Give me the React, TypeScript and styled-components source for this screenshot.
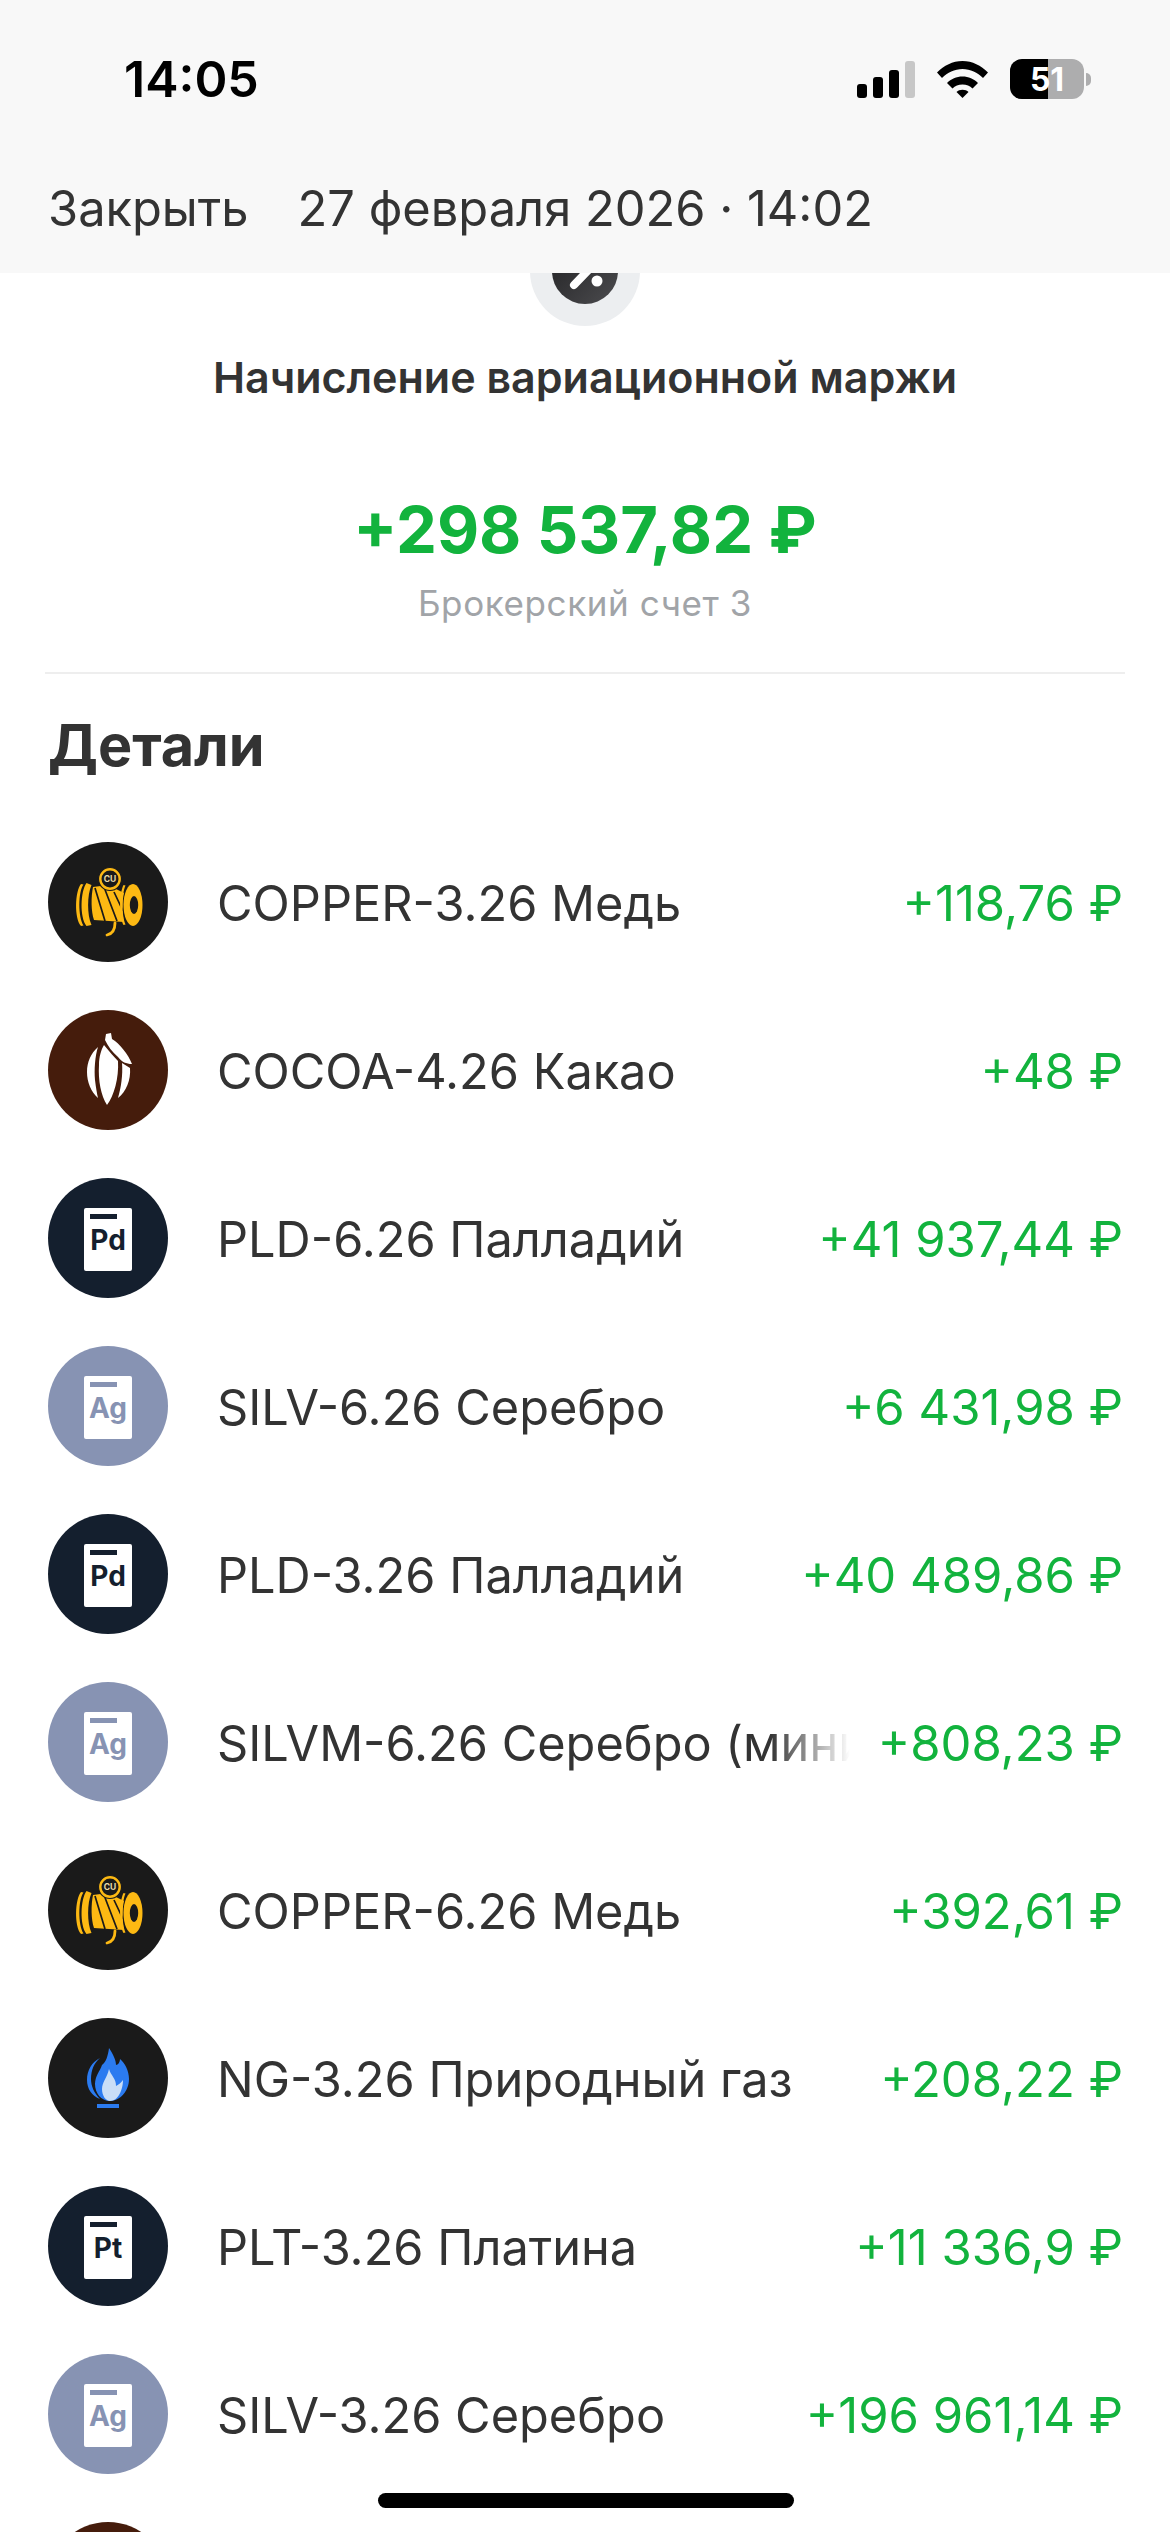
import { createGlobalStyle, styled } from "styled-components";

// last row is only peeking out from under the screen edge, its text is not visible
const rows = [
  { id: 1, icon: "copper", name: "COPPER-3.26 Медь", value: "+118,76 ₽" },
  { id: 2, icon: "cocoa", name: "COCOA-4.26 Какао", value: "+48 ₽" },
  { id: 3, icon: "Pd", name: "PLD-6.26 Палладий", value: "+41 937,44 ₽" },
  { id: 4, icon: "Ag", name: "SILV-6.26 Серебро", value: "+6 431,98 ₽" },
  { id: 5, icon: "Pd", name: "PLD-3.26 Палладий", value: "+40 489,86 ₽" },
  { id: 6, icon: "Ag", name: "SILVM-6.26 Серебро (мини)", value: "+808,23 ₽", fade: true },
  { id: 7, icon: "copper", name: "COPPER-6.26 Медь", value: "+392,61 ₽" },
  { id: 8, icon: "gas", name: "NG-3.26 Природный газ", value: "+208,22 ₽" },
  { id: 9, icon: "Pt", name: "PLT-3.26 Платина", value: "+11 336,9 ₽" },
  { id: 10, icon: "Ag", name: "SILV-3.26 Серебро", value: "+196 961,14 ₽" },
  { id: 11, icon: "cocoa", name: "", value: "" },
];

const CopperIcon = () => (
  <svg viewBox="0 0 120 120" width="120" height="120">
    <circle cx="60" cy="60" r="60" fill="#1a1a1a" />
    <path d="M33 42C27 49 26 76 33 84l2.500-.5C30 75 30 50 35.500 42.500z" fill="#fdb913" />
    <path d="M38.500 41C32.500 49 31.500 75 38.500 84l5-1C39 73 39 53 43.500 43z" fill="#fdb913" />
    <path d="M45 45l15-2 16 8c-2 8-2 21 0 29l-30-2c-3-9-3-23-1-33z" fill="#fdb913" />
    <path d="M47 46l10 33M56 45l13 34M66 50l9 19" stroke="#1a1a1a" strokeWidth="1.700" fill="none" />
    <path d="M75.500 43C71 52 71 74 75.500 83l2-.5C73.500 74 73.500 52 77.500 43.500z" fill="#fdb913" />
    <ellipse cx="85" cy="63" rx="9.500" ry="21" fill="#fdb913" />
    <ellipse cx="86" cy="63" rx="4.200" ry="9" fill="#1a1a1a" />
    <circle cx="62" cy="37" r="11.500" fill="#fdb913" stroke="#1a1a1a" strokeWidth="1.200" />
    <circle cx="62" cy="37" r="8.500" fill="#1a1a1a" />
    <text x="62" y="40" textAnchor="middle" fontSize="8.500" fontWeight="700" fontFamily="Inter, sans-serif" fill="#e9d9a8">
      CU
    </text>
    <path d="M67 81c0 7-3 11-8 12" stroke="#fdb913" strokeWidth="2.800" fill="none" strokeLinecap="round" />
  </svg>
);

const CocoaIcon = () => (
  <svg viewBox="0 0 120 120" width="120" height="120">
    <circle cx="60" cy="60" r="60" fill="#451c0c" />
    <path d="M58 24l5-1 1 6c8 5 16 15 20 25-6 0-10-2-14-7-6-5-10-11-13-17z" fill="#fff" />
    <path d="M56 35c6 7 10 12 14 16 1 17-4 35-11 44-6-9-9-25-8-40 0-8 2-15 5-20z" fill="#fff" />
    <path d="M50 37c-3 9-4 23-3 33 1 8 2 14 3 18-7-6-11-16-11-26s4-19 11-25z" fill="#fff" />
    <path d="M74 53l8 5c1 12-4 24-12 30 3-10 5-23 4-35z" fill="#fff" />
  </svg>
);

const GasIcon = () => (
  <svg viewBox="0 0 120 120" width="120" height="120">
    <circle cx="60" cy="60" r="60" fill="#1a1a1a" />
    <path d="M52 40c-8 4-13 12-13 22 0 9 5 16 13 19-6-6-9-13-9-20 0-9 3-16 9-21z" fill="#2b7bf0" />
    <path d="M61 30c4 6 7 12 7 17 2 0 4-3 4-6 5 4 9 12 9 20 0 12-9 22-19 22-9 0-15-8-15-17 0-8 5-13 7-19 4-3 6-9 7-17z" fill="#2b7bf0" />
    <path d="M61 51c2 7 7 9 7 17 2-1 5-3 7-6 0 10-5 21-13 21-4 0-8-5-8-12 0-7 5-11 7-20z" fill="#c9def7" />
    <rect x="49" y="86" width="22" height="4" fill="#2b7bf0" />
  </svg>
);

const MetalIcon = ({ symbol }: { symbol: string }) => (
  <MetalCircle $light={symbol === "Ag"}>
    <MetalCard>
      <MetalBar $light={symbol === "Ag"} />
      <MetalSymbol $light={symbol === "Ag"}>{symbol}</MetalSymbol>
    </MetalCard>
  </MetalCircle>
);

const RowIcon = ({ icon }: { icon: string }) => {
  if (icon === "copper") return <CopperIcon />;
  if (icon === "cocoa") return <CocoaIcon />;
  if (icon === "gas") return <GasIcon />;
  return <MetalIcon symbol={icon} />;
};

const App = () => {
  return (
    <Screen>
      <GlobalStyle />
      <Header>
        <StatusBar>
          <Time>14:05</Time>
          <StatusIcons>
            <SignalBars>
              <SignalBar $h={14} />
              <SignalBar $h={21} />
              <SignalBar $h={28} />
              <SignalBar $h={37} $off />
            </SignalBars>
            <svg viewBox="0 0 51 37" width="51" height="37">
              <path d="M0 11.500C7 4.500 15.500 0 25.500 0S44 4.500 51 11.500l-5 5.500C40.500 11.500 33.500 8 25.500 8S10.500 11.500 5 17z" fill="#000" />
              <path d="M10 22c4-4 9.500-6.500 15.500-6.500S37 18 41 22l-5.500 5.500c-2.500-2.500-6-4-10-4s-7.500 1.500-10 4z" fill="#000" />
              <path d="M19.500 31c1.500-1.500 3.500-2.200 6-2.200s4.500.7 6 2.200l-6 6z" fill="#000" />
            </svg>
            <Battery>
              <BatteryBody>
                <BatteryLevel />
                <BatteryText>51</BatteryText>
              </BatteryBody>
              <BatteryCap />
            </Battery>
          </StatusIcons>
        </StatusBar>
        <TopBar>
          <CloseLabel>Закрыть</CloseLabel>
          <DateLabel>27 февраля 2026 · 14:02</DateLabel>
        </TopBar>
      </Header>
      <Scroll>
        <HeroIcon>
          <svg viewBox="0 0 66 66" width="66" height="66">
            <defs>
              <linearGradient id="heroFill" x1="0" y1="0" x2="1" y2="1">
                <stop offset="0" stopColor="#1f1f21" />
                <stop offset="1" stopColor="#4c4c4f" />
              </linearGradient>
            </defs>
            <circle cx="33" cy="33" r="33" fill="url(#heroFill)" />
            <path d="M22 47l26-27" stroke="#fff" strokeWidth="8" strokeLinecap="round" />
            <circle cx="21" cy="21" r="5.500" fill="#fff" />
            <circle cx="45" cy="43" r="5.500" fill="#fff" />
          </svg>
        </HeroIcon>
        <OperationTitle>Начисление вариационной маржи</OperationTitle>
        <TotalAmount>+298 537,82 ₽</TotalAmount>
        <AccountName>Брокерский счет 3</AccountName>
        <Divider />
        <SectionTitle>Детали</SectionTitle>
        <List>
          {rows.map((row) => (
            <Row key={row.id}>
              <IconSlot>
                <RowIcon icon={row.icon} />
              </IconSlot>
              <RowName $fade={row.fade}>{row.name}</RowName>
              <RowValue>{row.value}</RowValue>
            </Row>
          ))}
        </List>
      </Scroll>
      <HomeIndicator />
    </Screen>
  );
};

export default App;

const GlobalStyle = createGlobalStyle`
  html, body {
    margin: 0;
    padding: 0;
    background: #fff;
  }
  * {
    box-sizing: border-box;
  }
`;

const Screen = styled.div`
  position: relative;
  width: 1170px;
  height: 2532px;
  display: flex;
  flex-direction: column;
  overflow: hidden;
  background: #fff;
  font-family: Inter, "Noto Sans", sans-serif;
  color: #333;
`;

const Header = styled.header`
  position: relative;
  z-index: 2;
  height: 273px;
  flex-shrink: 0;
  background: #f8f8f8;
`;

const StatusBar = styled.div`
  height: 156px;
  padding: 48px 79px 0 124px;
  display: flex;
  justify-content: space-between;
  align-items: flex-start;
`;

const Time = styled.span`
  margin-top: 1px;
  color: #000;
  font-size: 50px;
  font-weight: 600;
  line-height: 60px;
`;

const StatusIcons = styled.div`
  display: flex;
  align-items: center;
  gap: 22px;
  padding-top: 11px;
`;

const SignalBars = styled.div`
  display: flex;
  align-items: flex-end;
  gap: 6px;
  height: 37px;
`;

const SignalBar = styled.div<{ $h: number; $off?: boolean }>`
  width: 10px;
  height: ${(p) => p.$h}px;
  border-radius: 3px;
  background: ${(p) => (p.$off ? "#c7c7c7" : "#000")};
`;

const Battery = styled.div`
  display: flex;
  align-items: center;
  gap: 2px;
`;

const BatteryBody = styled.div`
  position: relative;
  width: 74px;
  height: 40px;
  border-radius: 12px;
  overflow: hidden;
  background: #adadae;
`;

const BatteryLevel = styled.div`
  width: 38px;
  height: 100%;
  background: #000;
`;

const BatteryText = styled.span`
  position: absolute;
  inset: 0;
  display: flex;
  align-items: center;
  justify-content: center;
  color: #fff;
  font-size: 32px;
  font-weight: 700;
`;

const BatteryCap = styled.div`
  width: 5px;
  height: 13px;
  border-radius: 0 6px 6px 0;
  background: #adadae;
`;

const TopBar = styled.div`
  display: flex;
  align-items: center;
  padding: 0 48px;
  gap: 49px;
  height: 104px;
`;

const CloseLabel = styled.span`
  font-size: 48.8px;
  font-weight: 400;
`;

const DateLabel = styled.span`
  font-size: 48.8px;
  font-weight: 400;
`;

const Scroll = styled.main`
  flex: 1;
  min-height: 0;
  overflow: hidden;
  display: flex;
  flex-direction: column;
`;

const HeroIcon = styled.div`
  align-self: center;
  flex-shrink: 0;
  width: 110px;
  height: 110px;
  margin-top: -57px;
  border-radius: 50%;
  background: #eceef0;
  display: flex;
  align-items: center;
  justify-content: center;
`;

const OperationTitle = styled.h1`
  margin: 26px 0 0;
  text-align: center;
  font-size: 43px;
  font-weight: 600;
  line-height: 50px;
`;

const TotalAmount = styled.div`
  margin-top: 88px;
  text-align: center;
  color: #12b33d;
  font-size: 65px;
  font-weight: 700;
  line-height: 80px;
`;

const AccountName = styled.div`
  margin-top: 11px;
  text-align: center;
  color: #a1a4a8;
  font-size: 35px;
  line-height: 44px;
  letter-spacing: 0.6px;
`;

const Divider = styled.div`
  margin: 47px 45px 0;
  height: 2px;
  flex-shrink: 0;
  background: #eeeeee;
`;

const SectionTitle = styled.h2`
  margin: 36px 48px 0;
  font-size: 57.5px;
  font-weight: 700;
  line-height: 70px;
`;

const List = styled.div`
  margin-top: 38px;
  display: flex;
  flex-direction: column;
  flex-shrink: 0;
`;

const Row = styled.div`
  height: 168px;
  flex-shrink: 0;
  padding: 0 47px 0 48px;
  display: flex;
  align-items: center;
`;

const IconSlot = styled.div`
  width: 120px;
  height: 120px;
  flex-shrink: 0;
  margin-right: 49px;
  svg {
    display: block;
  }
`;

const RowName = styled.div<{ $fade?: boolean }>`
  position: relative;
  flex: 1;
  min-width: 0;
  padding-top: 3px;
  overflow: hidden;
  white-space: nowrap;
  font-size: 48.7px;
  line-height: 60px;
  ${(p) =>
    p.$fade &&
    `
    &::after {
      content: "";
      position: absolute;
      top: 0;
      right: 0;
      bottom: 0;
      width: 80px;
      background: linear-gradient(to right, rgba(255, 255, 255, 0), #fff);
    }
  `}
`;

const RowValue = styled.div`
  flex-shrink: 0;
  margin-left: 28px;
  padding-top: 3px;
  color: #12b33d;
  font-size: 49px;
  line-height: 60px;
  white-space: nowrap;
`;

const MetalCircle = styled.div<{ $light: boolean }>`
  width: 120px;
  height: 120px;
  border-radius: 50%;
  background: ${(p) => (p.$light ? "#8793b3" : "#141f2e")};
  display: flex;
  align-items: center;
  justify-content: center;
`;

const MetalCard = styled.div`
  width: 48px;
  height: 63px;
  margin-top: 2px;
  padding: 6px;
  border-radius: 2px;
  background: #fff;
  display: flex;
  flex-direction: column;
`;

const MetalBar = styled.div<{ $light: boolean }>`
  width: 27px;
  height: 5px;
  flex-shrink: 0;
  background: ${(p) => (p.$light ? "#8793b3" : "#141f2e")};
`;

const MetalSymbol = styled.span<{ $light: boolean }>`
  margin: 5px -4px 0;
  color: ${(p) => (p.$light ? "#8793b3" : "#141f2e")};
  font-size: 28px;
  font-weight: 700;
  line-height: 32px;
  text-align: center;
`;

const HomeIndicator = styled.div`
  position: absolute;
  left: 378px;
  top: 2493px;
  z-index: 3;
  width: 416px;
  height: 15px;
  border-radius: 8px;
  background: #000;
`;
